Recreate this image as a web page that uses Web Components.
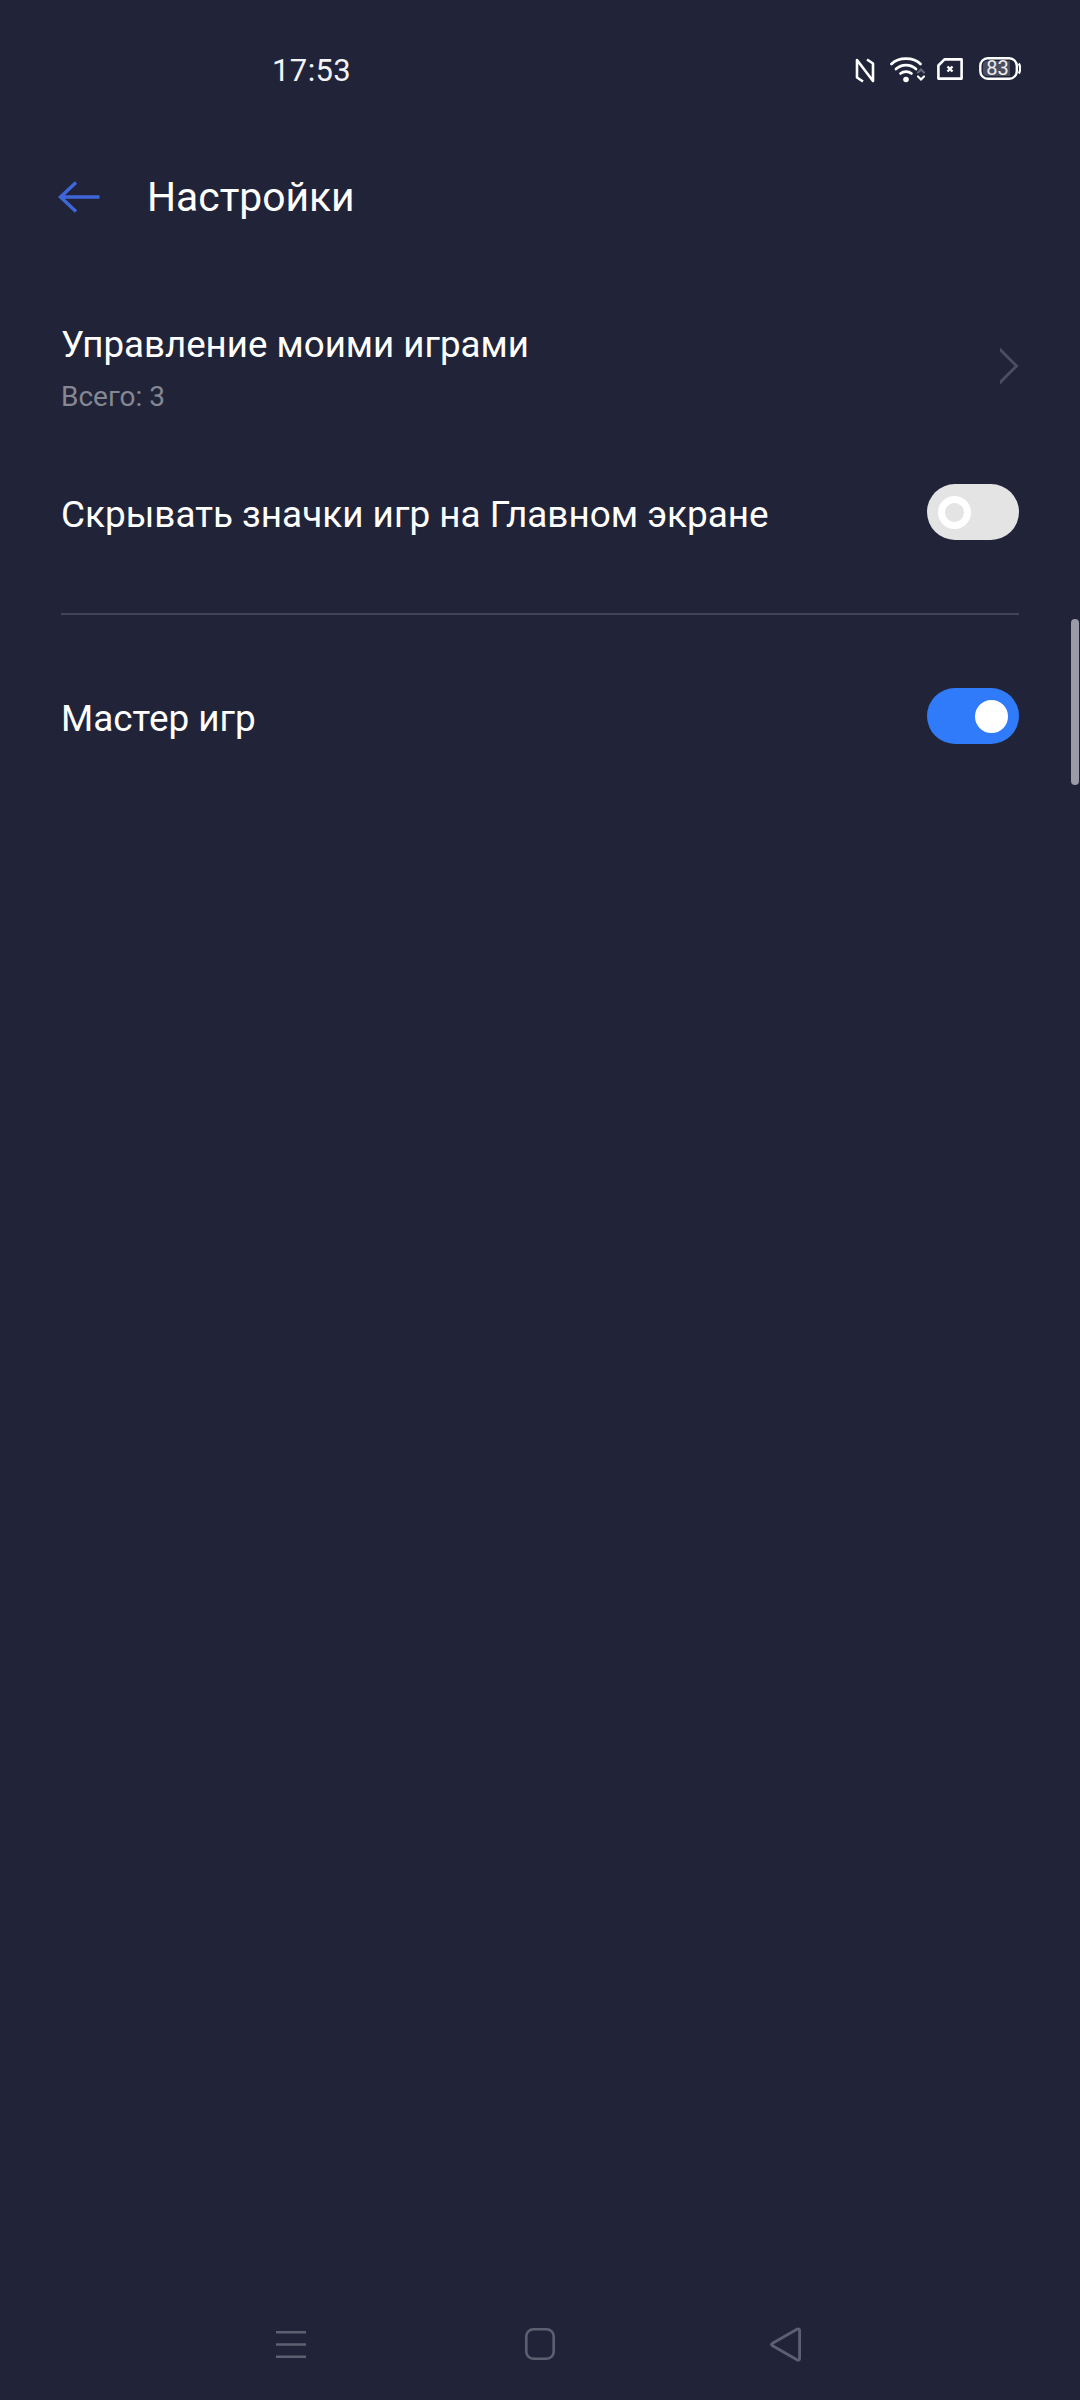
<!DOCTYPE html>
<html lang="ru">
<head>
<meta charset="utf-8">
<title>Настройки</title>
<style>
  html, body { margin: 0; padding: 0; height: 2400px; background: #212439; overflow: hidden; }
  body { font-family: Roboto, "Noto Sans", sans-serif; color: #fff; }
  settings-screen { height: 2400px; }
</style>
</head>
<body>
<settings-screen>
  <status-bar time="17:53" battery="83"></status-bar>
  <app-header>Настройки</app-header>
  <setting-row class="first" sub="Всего: 3" chevron>Управление моими играми</setting-row>
  <setting-row toggle="off">Скрывать значки игр на Главном экране</setting-row>
  <list-divider></list-divider>
  <setting-row toggle="on">Мастер игр</setting-row>
</settings-screen>

<script>
class SettingsScreen extends HTMLElement {
  constructor() {
    super();
    this.attachShadow({mode: 'open'});
  }
  connectedCallback() {
    this.shadowRoot.innerHTML = `
      <style>
        :host { display: flex; flex-direction: column; position: relative; width: 1080px; background: #212439; }
        .main { flex: 1; }
        .scrollbar {
          position: absolute; left: 1071px; top: 619px;
          width: 8px; height: 166px; border-radius: 4px; background: #9a9ba6;
        }
      </style>
      <div class="main"><slot></slot></div>
      <div class="scrollbar"></div>
      <nav-bar></nav-bar>
    `;
  }
}

class StatusBar extends HTMLElement {
  constructor() {
    super();
    this.attachShadow({mode: 'open'});
  }
  connectedCallback() {
    this.shadowRoot.innerHTML = `
      <style>
        :host { display: flex; align-items: center; height: 140px; box-sizing: border-box; padding: 0 59px 0 272px; }
        .time { font-size: 31px; letter-spacing: 0.4px; color: #f4f4f6; }
        .icons { margin-left: auto; display: flex; align-items: center; }
        svg { display: block; }
        .wifi { margin-left: 15px; }
        .sim { margin: 0 16px 3px 11px; }
        .battery { position: relative; width: 42px; height: 23px; margin-bottom: 3px; }
        .battery b {
          position: absolute; inset: 0 5px 0 0; text-align: center;
          font: 400 20px/23px Roboto, sans-serif; color: #eceded;
        }
      </style>
      <div class="time">${this.getAttribute('time')}</div>
      <div class="icons">
        <svg width="20" height="25" viewBox="0 0 20 25" fill="none" stroke="#fff" stroke-width="2.6" stroke-linejoin="round">
          <path d="M8 23.5 L2 19.5 V2 L18 23 V5.5 L12 1.5"/>
        </svg>
        <svg class="wifi" width="36" height="26" viewBox="0 0 36 26" fill="none" stroke="#fff" stroke-width="2.7" stroke-linecap="round">
          <path d="M1.5 7 C8.5 -0.3 23.5 -0.3 30.5 7"/>
          <path d="M6 12 C11.5 6.8 20.5 6.8 26 12"/>
          <path d="M10.5 16.5 C13.5 14 18.5 14 21.5 16.5"/>
          <circle cx="16" cy="22.5" r="2.8" fill="#fff" stroke="none"/>
          <path d="M28 15.5 L31 12.5 L34 15.5" stroke="#666878" stroke-width="2.2"/>
          <path d="M28 19.5 L31 22.5 L34 19.5" stroke-width="2.2"/>
        </svg>
        <svg class="sim" width="26" height="22" viewBox="0 0 26 22" fill="none" stroke="#fff">
          <path d="M7.5 1.4 H24.6 V20.6 H1.4 V7.5 Z" stroke-width="2.6" stroke-linejoin="round"/>
          <path d="M10.5 8.5 L15.5 13.5 M15.5 8.5 L10.5 13.5" stroke-width="2.4"/>
        </svg>
        <div class="battery">
          <svg width="42" height="23" viewBox="0 0 42 23" fill="none">
            <rect x="1.3" y="1.3" width="36.5" height="20.4" rx="7.5" stroke="#fff" stroke-width="2.4"/>
            <path d="M8 4 H31 V19 H8 A4 4 0 0 1 4 15 V8 A4 4 0 0 1 8 4 Z" fill="#4a4d60"/>
            <path d="M39.8 6.5 C41.6 9 41.6 14 39.8 16.5" stroke="#fff" stroke-width="2.2"/>
          </svg>
          <b>${this.getAttribute('battery')}</b>
        </div>
      </div>
    `;
  }
}

class AppHeader extends HTMLElement {
  constructor() {
    super();
    this.attachShadow({mode: 'open'});
  }
  connectedCallback() {
    this.shadowRoot.innerHTML = `
      <style>
        :host { display: flex; align-items: center; height: 114px; padding-left: 58px; font-size: 40.8px; color: #fff; }
        svg { display: block; margin-right: 47px; }
      </style>
      <svg width="42" height="32" viewBox="0 0 42 32" fill="none" stroke="#3f66d9" stroke-width="3.4">
        <path d="M41.5 16 H3 M18 1.5 L2.5 16 L18 30.5"/>
      </svg>
      <slot></slot>
    `;
  }
}

class ToggleSwitch extends HTMLElement {
  constructor() {
    super();
    this.attachShadow({mode: 'open'});
  }
  connectedCallback() {
    this.shadowRoot.innerHTML = `
      <style>
        :host { display: flex; align-items: center; box-sizing: border-box; width: 92px; height: 56px; padding: 0 11px; border-radius: 28px; background: #e4e4e4; }
        :host([on]) { background: #307bf9; justify-content: flex-end; }
        .knob { box-sizing: border-box; width: 33px; height: 33px; border-radius: 50%; border: 7px solid #fff; background: #e4e4e4; }
        :host([on]) .knob { background: #fff; }
      </style>
      <div class="knob"></div>
    `;
  }
}

class SettingRow extends HTMLElement {
  constructor() {
    super();
    this.attachShadow({mode: 'open'});
  }
  connectedCallback() {
    const sub = this.getAttribute('sub');
    const toggle = this.getAttribute('toggle');
    let right = '';
    if (this.hasAttribute('chevron')) {
      right = `<svg width="19" height="36" viewBox="0 0 19 36" fill="none" stroke="#4b4e60" stroke-width="3"><path d="M-1 0.5 L16.5 18 L-1 35.5"/></svg>`;
    } else if (toggle) {
      right = `<toggle-switch ${toggle === 'on' ? 'on' : ''}></toggle-switch>`;
    }
    this.shadowRoot.innerHTML = `
      <style>
        :host { display: flex; align-items: center; justify-content: space-between; box-sizing: border-box; min-height: 106px; padding: 0 61px; font-size: 36.9px; color: #fff; }
        :host(.first) { min-height: 205px; padding-top: 24px; font-size: 36.7px; }
        .label { line-height: 46px; padding-top: 5px; }
        :host(.first) .label { padding-top: 0; }
        .sub { margin-top: 11px; font-size: 28px; line-height: 36px; color: #858793; }
        svg { display: block; margin-bottom: 5px; }
      </style>
      <div>
        <div class="label"><slot></slot></div>
        ${sub ? `<div class="sub">${sub}</div>` : ''}
      </div>
      ${right}
    `;
  }
}

class ListDivider extends HTMLElement {
  constructor() {
    super();
    this.attachShadow({mode: 'open'});
  }
  connectedCallback() {
    this.shadowRoot.innerHTML = `
      <style>
        :host { display: block; padding: 48px 61px; }
        div { height: 2px; background: #41445a; }
      </style>
      <div></div>
    `;
  }
}

class NavBar extends HTMLElement {
  constructor() {
    super();
    this.attachShadow({mode: 'open'});
  }
  connectedCallback() {
    this.shadowRoot.innerHTML = `
      <style>
        :host { display: flex; align-items: center; height: 112px; padding-left: 276px; box-sizing: border-box; }
        svg { display: block; }
        .home { margin-left: 219px; }
        .back { margin-left: 215px; }
      </style>
      <svg width="30" height="27" viewBox="0 0 30 27" fill="none" stroke="#5d6070" stroke-width="2.4">
        <path d="M0 1.2 H30 M0 13.5 H30 M0 25.8 H30"/>
      </svg>
      <svg class="home" width="30" height="32" viewBox="0 0 30 32" fill="none" stroke="#5d6070" stroke-width="2.6">
        <rect x="1.3" y="1.3" width="27.4" height="29.4" rx="7"/>
      </svg>
      <svg class="back" width="31" height="35" viewBox="0 0 31 35" fill="none" stroke="#5d6070" stroke-width="2.8" stroke-linejoin="round">
        <path d="M29.6 3.5 V31.5 C29.6 33 28.4 33.6 27 32.8 L2.6 18.8 C1.2 18 1.2 17 2.6 16.2 L27 2.2 C28.4 1.4 29.6 2 29.6 3.5 Z"/>
      </svg>
    `;
  }
}

customElements.define('settings-screen', SettingsScreen);
customElements.define('status-bar', StatusBar);
customElements.define('app-header', AppHeader);
customElements.define('toggle-switch', ToggleSwitch);
customElements.define('setting-row', SettingRow);
customElements.define('list-divider', ListDivider);
customElements.define('nav-bar', NavBar);
</script>
</body>
</html>
